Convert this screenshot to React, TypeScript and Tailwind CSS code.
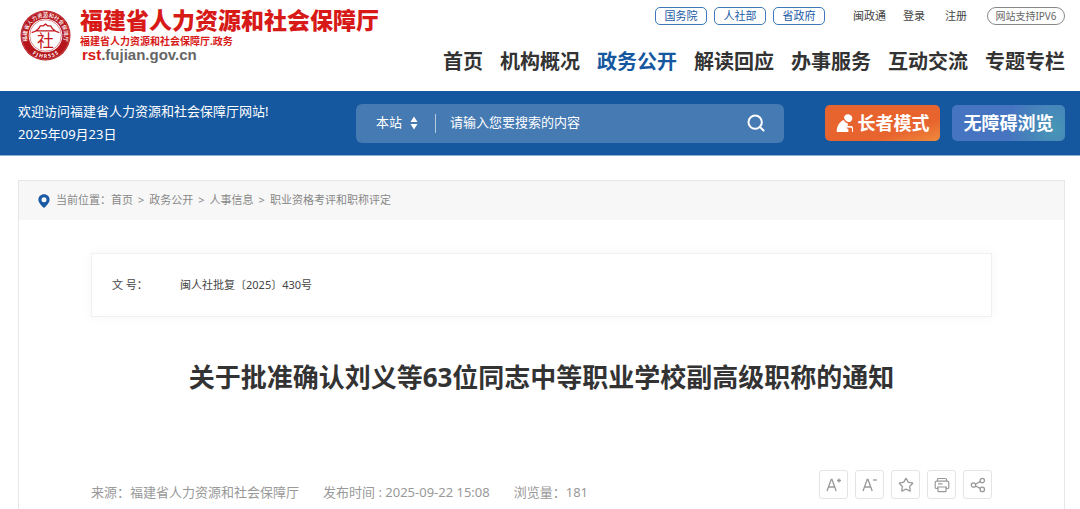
import React, { useState } from "react"
import { Search, Star } from "lucide-react"

const portals = ["国务院", "人社部", "省政府"]

const navItems = ["首页", "机构概况", "政务公开", "解读回应", "办事服务", "互动交流", "专题专栏"]

const crumbs = ["首页", "政务公开", "人事信息", "职业资格考评和职称评定"]

const Seal = () => (
  <svg viewBox="0 0 100 100" className="size-[51px] shrink-0" aria-hidden="true">
    <defs>
      <path id="sealTop" d="M 17 66 A 36.500 36.500 0 1 1 83 66" />
      <path id="sealBottom" d="M 8 62 A 43.500 43.500 0 0 0 92 62" />
    </defs>
    <circle cx="50" cy="50" r="49" fill="#b5161c" />
    <circle cx="50" cy="50" r="47" fill="none" stroke="#d8686b" strokeWidth="1" />
    <circle cx="50" cy="50" r="33" fill="#fff" />
    <circle cx="50" cy="50" r="31" fill="none" stroke="#b5161c" strokeWidth="1" />
    <text fontSize="10.500" fontWeight="500" fill="#fff">
      <textPath href="#sealTop" startOffset="50%" textAnchor="middle">福建省人力资源和社会保障厅</textPath>
    </text>
    <text fontSize="10" fontWeight="700" fill="#fff">
      <textPath href="#sealBottom" startOffset="50%" textAnchor="middle">F J H R S S S</textPath>
    </text>
    <path
      d="M24 44 C32 42 37 37 40 31 L46 31 L50 27.500 L54 31 L60 31 C63 37 68 42 76 44 M33 41 H67"
      fill="none"
      stroke="#c2161c"
      strokeWidth="2.600"
      strokeLinecap="round"
      strokeLinejoin="round"
    />
    <text x="50" y="72" fontSize="33" fontWeight="400" fill="#c2161c" textAnchor="middle">社</text>
  </svg>
)

const ElderIcon = () => (
  <svg viewBox="0 0 18 20" className="h-5 w-[18px]" fill="#fff" aria-hidden="true">
    <path d="M8 4.5 C8.5 1.8 11 .8 13.300 1.500 C16 2.300 17 5 15.800 7.200 C14.800 9 12.600 9.600 10.800 8.600 C9.700 7.500 8.700 6.800 8 4.500 Z" />
    <path d="M.7 19 C.7 13.500 3 9 7.700 7 C8.700 8.800 10 10 12 10.400 L11.500 12.800 L15.500 13.500 L15.500 14.800 L10.300 14.600 L12.400 16.500 L12.400 19 Z" />
    <path d="M14 13.500 C15.500 12.500 17 13.500 17 15 L17 19 L16 19 L16 15.500 Z" />
  </svg>
)

const PinIcon = () => (
  <svg viewBox="0 0 12 14" className="h-[14px] w-3" aria-hidden="true">
    <path
      d="M6 .3 C2.800 .3 .4 2.700 .4 5.700 C.4 8.800 3.300 10.900 4.700 13 Q6 14.600 7.300 13 C8.700 10.900 11.600 8.800 11.600 5.700 C11.600 2.700 9.200 .3 6 .3 Z M6 3.200 A2.500 2.500 0 1 1 6 8.200 A2.500 2.500 0 1 1 6 3.200 Z"
      fill="#1a5aa5"
      fillRule="evenodd"
    />
  </svg>
)

const FontIcon = ({ sign }: { sign: string }) => (
  <svg viewBox="0 0 16 16" className="size-4" fill="none" stroke="#999" strokeWidth="1.300" aria-hidden="true">
    <path d="M1 14 L5.200 2.500 L6 2.500 L10.200 14 M2.500 10 H8.700" />
    <path d={sign === "+" ? "M11 3.500 H15 M13 1.500 V5.500" : "M11 3 H15"} />
  </svg>
)

const PrintIcon = () => (
  <svg viewBox="0 0 16 16" className="size-4" fill="none" stroke="#999" strokeWidth="1.200" aria-hidden="true">
    <path d="M3.500 4 V2.500 Q3.500 1.500 4.500 1.500 H11.500 Q12.500 1.500 12.500 2.500 V4" />
    <path d="M4 11.500 H2.500 Q1.200 11.500 1.200 10.200 V5.800 Q1.200 4.200 2.800 4.200 H13.200 Q14.800 4.200 14.800 5.800 V10.200 Q14.800 11.500 13.500 11.500 H12" />
    <path d="M3 10 H13 M4 10 V14 Q4 14.600 4.600 14.600 H11.400 Q12 14.600 12 14 V10 M4 6.800 H8.500" />
  </svg>
)

const ShareIcon = () => (
  <svg viewBox="0 0 16 16" className="size-4" fill="none" stroke="#999" strokeWidth="1.300" aria-hidden="true">
    <circle cx="3.500" cy="8" r="2.200" />
    <circle cx="12.300" cy="3.600" r="2.200" />
    <circle cx="12.300" cy="12.400" r="2.200" />
    <path d="M5.500 7 L10.300 4.600 M5.500 9 L10.300 11.400" />
  </svg>
)

const tools = [
  { label: "放大字体", icon: <FontIcon sign="+" /> },
  { label: "缩小字体", icon: <FontIcon sign="-" /> },
  { label: "收藏", icon: <Star className="size-4" strokeWidth={1.9} color="#999" /> },
  { label: "打印", icon: <PrintIcon /> },
  { label: "分享", icon: <ShareIcon /> },
]

const Header = () => (
  <header className="flex h-[91px] items-start justify-between pl-5 pr-[15px]">
    <a href="#" className="flex gap-[9px] pt-[10px]">
      <Seal />
      <div className="-mt-1 whitespace-nowrap text-[#d71a18]">
        <h1 className="text-[23px] font-black leading-7">福建省人力资源和社会保障厅</h1>
        <p className="text-[10px] font-bold leading-[14px]">福建省人力资源和社会保障厅.政务</p>
        <p className="pl-[2px] font-['Liberation_Sans',sans-serif] text-[15px] font-bold leading-[14px]">
          rst<span className="text-[#666]">.fujian.gov.cn</span>
        </p>
      </div>
    </a>

    <div className="flex flex-col items-end whitespace-nowrap">
      <div className="mt-[7px] flex h-[18px] items-center text-[11px] text-[#444]">
        <div className="flex gap-[7px]">
          {portals.map((item) => (
            <a key={item} href="#" className="flex h-[18px] w-[52px] items-center justify-center rounded-[5px] border border-[#3f78b8] text-[#1a5aa5]">
              {item}
            </a>
          ))}
        </div>
        <a href="#" className="ml-7">闽政通</a>
        <a href="#" className="ml-[17px]">登录</a>
        <a href="#" className="ml-5">注册</a>
        <a href="#" className="ml-5 flex h-[18px] w-[78px] items-center justify-center rounded-full border border-[#888] text-[10px] text-[#666]">
          网站支持IPV6
        </a>
      </div>
      <nav className="mt-5 flex gap-[17px] text-[20px] font-bold leading-[34px] text-[#333]">
        {navItems.map((item) => (
          <a key={item} href="#" className={item === "政务公开" ? "text-[#15589f]" : ""}>{item}</a>
        ))}
      </nav>
    </div>
  </header>
)

const SearchBar = () => {
  const [scope, setScope] = useState("本站")
  const [keyword, setKeyword] = useState("")

  return (
    <form
      onSubmit={(e) => e.preventDefault()}
      className="flex h-[39px] w-[428px] items-center rounded-md bg-[#467ab3] pl-5 pr-[18px] text-[13px] text-white"
    >
      <div className="relative flex items-center">
        <select
          aria-label="搜索范围"
          value={scope}
          onChange={(e) => setScope(e.target.value)}
          className="w-[42px] appearance-none bg-transparent outline-none"
        >
          <option>本站</option>
        </select>
        <svg viewBox="0 0 8 14" className="pointer-events-none absolute right-0 h-[14px] w-2" fill="#fff" aria-hidden="true">
          <path d="M4 .5 L7.500 6 H.5 Z M4 13.500 L.5 8 H7.500 Z" />
        </svg>
      </div>
      <span className="ml-[17px] h-[19px] w-px bg-[#b5cae1]" />
      <input
        type="text"
        aria-label="搜索"
        placeholder="请输入您要搜索的内容"
        value={keyword}
        onChange={(e) => setKeyword(e.target.value)}
        className="ml-[14px] min-w-0 flex-1 bg-transparent outline-none placeholder:text-white"
      />
      <button type="submit" aria-label="提交搜索">
        <Search className="size-5" strokeWidth={2.4} />
      </button>
    </form>
  )
}

const App = () => {
  return (
    <div className="bg-white font-['Noto_Sans','Noto_Sans_CJK_SC',sans-serif]" lang="zh-CN">
      <Header />

      <section className="flex h-[65px] items-center border-b border-[#8fb0d4] bg-[#15589f] pl-[18px] pr-[15px] text-white">
        <div className="w-[338px] shrink-0 text-[13px] leading-[23px]">
          <p>欢迎访问福建省人力资源和社会保障厅网站!</p>
          <p>2025年09月23日</p>
        </div>
        <SearchBar />
        <div className="ml-auto flex gap-3 whitespace-nowrap text-[18px] font-bold">
          <button className="flex h-9 w-[115px] items-center justify-center gap-1 rounded-[5px] bg-linear-to-br from-[#e8642f] from-70% to-[#ee8a3c]">
            <ElderIcon />
            长者模式
          </button>
          <button className="h-9 w-[113px] rounded-[5px] bg-[radial-gradient(circle_at_90%_65%,#4796b5,#4674c0_45%)]">
            无障碍浏览
          </button>
        </div>
      </section>

      <main className="ml-[18px] mr-[15px] mt-6 border border-b-0 border-[#e6e6e6] pb-[10px]">
        <nav className="flex h-[39px] items-center bg-[#f7f7f7] pl-[19px] text-[11px] text-[#888]">
          <PinIcon />
          <span className="ml-[6px]">当前位置：</span>
          {crumbs.map((item, index) => (
            <React.Fragment key={item}>
              {index > 0 && <span className="mx-[5px]">&gt;</span>}
              <a href="#">{item}</a>
            </React.Fragment>
          ))}
        </nav>

        <article className="ml-[72px] mr-[72px]">
          <dl className="mt-[33px] flex h-16 items-center border border-[#f0f0f0] pl-5 text-[11px] text-[#444] shadow-[0_0_12px_rgba(0,0,0,0.04)]">
            <dt className="w-[68px]">文 号：</dt>
            <dd>闽人社批复〔2025〕430号</dd>
          </dl>

          <h2 className="mt-[39px] text-center text-[26px] font-bold leading-[42px] text-[#333]">
            关于批准确认刘义等63位同志中等职业学校副高级职称的通知
          </h2>

          <div className="mt-[72px] flex items-start justify-between">
            <div className="flex gap-6 pt-3 text-[13px] leading-5 text-[#999]">
              <span>来源：福建省人力资源和社会保障厅</span>
              <span>发布时间 : 2025-09-22 15:08</span>
              <span>浏览量：181</span>
            </div>
            <div className="flex gap-[7px]">
              {tools.map((tool) => (
                <button key={tool.label} aria-label={tool.label} className="flex size-[29px] items-center justify-center rounded-[3px] border border-[#e4e4e4]">
                  {tool.icon}
                </button>
              ))}
            </div>
          </div>
        </article>
      </main>
    </div>
  )
}

export default App
